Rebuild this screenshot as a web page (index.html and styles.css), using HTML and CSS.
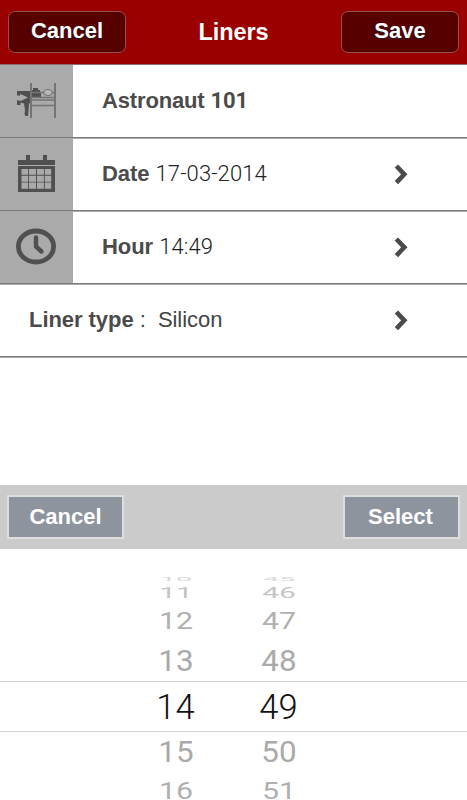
FILE: index.html
```html
<!DOCTYPE html>
<html lang="en">
<head>
<meta charset="utf-8">
<title>Liners</title>
<link rel="stylesheet" href="styles.css">
</head>
<body>
<header class="header">
  <button class="nav-btn">Cancel</button>
  <h1 class="title">Liners</h1>
  <button class="nav-btn save">Save</button>
</header>
<main class="form">
  <div class="row">
    <div class="icon-cell">
      <svg width="73" height="73" viewBox="0 0 73 73">
        <path fill="#505050" d="M17 26H31V25H33V23H38V25H40V27.5H41V32H32V38L29 38.500 28.500 46 28 51H25.500L24.500 49 25 45 24 38.500 20.500 37.500V40H17V35L20.500 36 28 32.500 20.500 29 20 30.500H17Z"/>
        <g fill="none" stroke="#747474"><path d="M31 18v35M55 18v35" stroke-width="2"/><path d="M32 32.500h23M32 35h23M32 40.500h23" stroke-width="1.300"/><path d="M32 27.500h12M51 27.500h4" stroke-width="1.300"/><ellipse cx="48" cy="27.500" rx="4.200" ry="3" fill="#b8b8b8" stroke-width="1.200"/></g>
      </svg>
    </div>
    <div class="label name"><b>Astronaut <span class="num">101</span></b></div>
  </div>
  <div class="row">
    <div class="icon-cell">
      <svg width="73" height="73" viewBox="0 0 73 73">
        <path fill="#505050" fill-rule="evenodd" d="M18 22h8v-5h4v5h13v-5h4v5h8v5h-37zM18 28h37v26h-37zM21.500 31v5.800h6.600v-5.800zM29 31v5.800h7v-5.800zM37 31v5.800h6.900v-5.800zM44.800 31v5.800h6.400v-5.800zM21.500 37.700v6h6.600v-6zM29 37.700v6h7v-6zM37 37.700v6h6.900v-6zM44.800 37.700v6h6.400v-6zM21.500 44.600v6.200h6.600v-6.200zM29 44.600v6.200h7v-6.200zM37 44.600v6.200h6.900v-6.200zM44.800 44.600v6.200h6.400v-6.200z"/>
      </svg>
    </div>
    <div class="label"><b>Date</b> <span class="num">17-03-2014</span></div>
    <svg class="chevron" width="14" height="21" viewBox="0 0 14 21"><path d="M2.4 2 10.3 10.3 2.4 18.6"/></svg>
  </div>
  <div class="row">
    <div class="icon-cell">
      <svg width="73" height="73" viewBox="0 0 73 73">
        <g fill="none" stroke="#505050"><ellipse cx="36" cy="35.500" rx="17.6" ry="15.500" stroke-width="4.8"/><path d="M36 26.500v9l5.500 5" stroke-width="4.4" stroke-linecap="round" stroke-linejoin="round"/></g>
      </svg>
    </div>
    <div class="label"><b>Hour</b> <span class="num">14:49</span></div>
    <svg class="chevron" width="14" height="21" viewBox="0 0 14 21"><path d="M2.4 2 10.3 10.3 2.4 18.6"/></svg>
  </div>
  <div class="row">
    <div class="label wide"><b>Liner type</b> <span class="value">:&nbsp; Silicon</span></div>
    <svg class="chevron" width="14" height="21" viewBox="0 0 14 21"><path d="M2.4 2 10.3 10.3 2.4 18.6"/></svg>
  </div>
</main>
<section class="sheet">
  <div class="toolbar">
    <button class="tool-btn">Cancel</button>
    <button class="tool-btn select">Select</button>
  </div>
  <div class="picker">
    <div class="tick t4"><span>10</span><span>45</span></div>
    <div class="tick t3"><span>11</span><span>46</span></div>
    <div class="tick t2"><span>12</span><span>47</span></div>
    <div class="tick t1"><span>13</span><span>48</span></div>
    <div class="tick current"><span>14</span><span>49</span></div>
    <div class="tick t1"><span>15</span><span>50</span></div>
    <div class="tick t2"><span>16</span><span>51</span></div>
  </div>
</section>
</body>
</html>
```
FILE: styles.css
```css
* { box-sizing: border-box; }
body {
  margin: 0;
  height: 800px;
  display: flex;
  flex-direction: column;
  overflow: hidden;
  background: #fff;
  font-family: "Liberation Sans", Arial, sans-serif;
  font-size: 22px;
  color: #444;
}
.header {
  height: 65px;
  flex: none;
  padding: 11px 8px 0;
  display: flex;
  justify-content: space-between;
  background: #9b0000;
  border-bottom: 1px solid #8c7070;
  color: #fff;
}
.title {
  margin: 0;
  font-size: 23.5px;
  line-height: 43px;
  letter-spacing: -0.1px;
}
.nav-btn {
  width: 118px;
  height: 42px;
  padding: 0 0 2px;
  border: 1.5px solid #965050;
  border-radius: 7px;
  background: #560000;
  color: #fff;
  font: bold 22px "Liberation Sans", Arial, sans-serif;
  text-shadow: 0 1px 1px #222;
}
.form { height: 420px; flex: none; }
.row {
  height: 73px;
  display: flex;
  align-items: center;
  position: relative;
}
.row::after {
  content: "";
  position: absolute;
  left: 0;
  right: 0;
  bottom: -1px;
  height: 2px;
  background: linear-gradient(#7c7c7c 50%, #aaa 50%);
}
.icon-cell { width: 73px; height: 73px; background: #aaa; }
.icon-cell svg { display: block; }
.label {
  width: 321px;
  padding: 0 0 2px 29px;
  white-space: pre;
  line-height: 26px;
  letter-spacing: -0.05px;
}
.label.wide { width: 394px; }
.label.name { letter-spacing: -0.15px; }
.label b { color: #4b4b4b; }
.num { font-family: Roboto, "Liberation Sans", sans-serif; }
.label > .num { font-weight: 300; letter-spacing: 0.1px; color: #222; }
.chevron { fill: none; stroke: #4b4b4b; stroke-width: 4.6; margin-bottom: 1px; }
.sheet { flex: 1; min-height: 0; }
.toolbar {
  height: 64px;
  padding: 10px 7px 0;
  display: flex;
  justify-content: space-between;
  background: #cbcbcb;
}
.tool-btn {
  width: 117px;
  height: 44px;
  padding: 0 0 1px;
  border: 2px solid #dedede;
  background: #8d949d;
  color: #fff;
  font: bold 22px "Liberation Sans", Arial, sans-serif;
}
.tool-btn.select { padding-right: 2px; }
.picker { height: 251px; padding-top: 25px; overflow: hidden; }
.tick {
  display: flex;
  justify-content: center;
  align-items: center;
  gap: 43px;
  padding-right: 13px;
  font: 400 34.5px/0.7 Roboto, "Liberation Sans", sans-serif;
  color: #aaa;
}
.tick span { width: 60px; text-align: center; }
.current { height: 51px; border: solid #d5d5d5; border-width: 1px 0; color: #111; font-weight: 300; padding-top: 1px; }
.t1 { height: 40px; }
.t2 { height: 39px; color: #b0b0b0; }
.t3 { height: 18px; color: #c4c4c4; }
.t4 { height: 10px; color: #d8d8d8; }
.t1 span { transform: scale(.91, .84); }
.t2 span { transform: scale(.88, .67); }
.t3 span { transform: scale(.87, .41); }
.t4 span { transform: scale(.84, .15); }
```
